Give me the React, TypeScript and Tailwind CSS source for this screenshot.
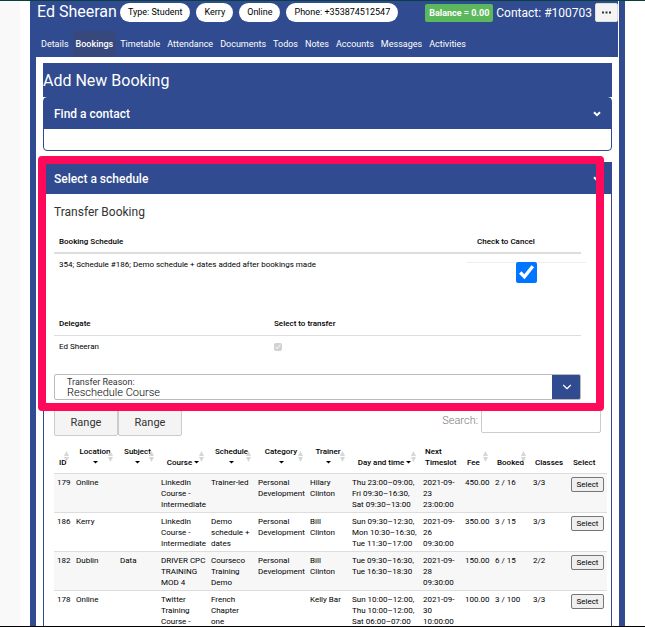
import React, { useState } from 'react';
import { ChevronDown } from 'lucide-react';

const tags = ['Type: Student', 'Kerry', 'Online', 'Phone: +353874512547'];

const tabs = [
  'Details',
  'Bookings',
  'Timetable',
  'Attendance',
  'Documents',
  'Todos',
  'Notes',
  'Accounts',
  'Messages',
  'Activities',
];

type Column = { label: string; width: string; caret?: 'below' | 'inline'; sort?: boolean };

const columns: Column[] = [
  { label: 'ID', width: 'w-[19px]', sort: true },
  { label: 'Location', width: 'w-[44px]', caret: 'below', sort: true },
  { label: 'Subject', width: 'w-[41px]', caret: 'below', sort: true },
  { label: 'Course', width: 'w-[50px]', caret: 'inline', sort: true },
  { label: 'Schedule', width: 'w-[47px]', caret: 'below', sort: true },
  { label: 'Category', width: 'w-[52px]', caret: 'below', sort: true },
  { label: 'Trainer', width: 'w-[42px]', caret: 'below', sort: true },
  { label: 'Day and time', width: 'w-[71px]', caret: 'inline', sort: true },
  { label: 'Next\nTimeslot', width: 'w-[42px]' },
  { label: 'Fee', width: 'w-[30px]', sort: true },
  { label: 'Booked', width: 'w-[38px]', sort: true },
  { label: 'Classes', width: 'w-[38px]' },
  { label: 'Select', width: 'w-[39px]' },
];

const schedules = [
  ['179', 'Online', '', 'LinkedIn\nCourse -\nIntermediate', 'Trainer-led', 'Personal\nDevelopment', 'Hilary\nClinton', 'Thu 23:00–09:00,\nFri 09:30–16:30,\nSat 09:30–13:00', '2021-09-\n23\n23:00:00', '450.00', '2 / 16', '3/3'],
  ['186', 'Kerry', '', 'LinkedIn\nCourse -\nIntermediate', 'Demo\nschedule +\ndates', 'Personal\nDevelopment', 'Bill\nClinton', 'Sun 09:30–12:30,\nMon 10:30–16:30,\nTue 11:30–17:00', '2021-09-\n26\n09:30:00', '350.00', '3 / 15', '3/3'],
  ['182', 'Dublin', 'Data', 'DRIVER CPC\nTRAINING\nMOD 4', 'Courseco\nTraining\nDemo', 'Personal\nDevelopment', 'Bill\nClinton', 'Tue 09:30–16:30,\nTue 16:30–18:30', '2021-09-\n28\n09:30:00', '150.00', '6 / 15', '2/2'],
  ['178', 'Online', '', 'Twitter\nTraining\nCourse -', 'French\nChapter\none', '', 'Kelly Bar', 'Sun 10:00–12:00,\nThu 10:00–12:00,\nSat 06:00–07:00', '2021-09-\n30\n10:00:00', '100.00', '3 / 100', '3/3'],
];

function Caret() {
  return (
    <svg viewBox="0 0 5 3" className="inline-block h-[3px] w-[5px] align-middle" aria-hidden="true">
      <path d="M0 0h5L2.5 2.5z" fill="#000" />
    </svg>
  );
}

function SortArrows() {
  return (
    <svg viewBox="0 0 5 11" className="absolute right-1 bottom-[11px] h-[11px] w-[5px]" aria-hidden="true">
      <path d="M2.5 0L5 5H0zM2.5 11L0 6h5z" fill="#d6d6d6" />
    </svg>
  );
}

function PanelHeader({ title }: { title: string }) {
  return (
    <button type="button" className="flex h-[31px] w-full items-center justify-between bg-[#304b8f] px-2.5 text-[12px] font-medium text-white">
      {title}
      <svg viewBox="0 0 8 6" className="h-1.5 w-2" aria-hidden="true">
        <path d="M1 1.2l3 3 3-3" fill="none" stroke="currentColor" strokeWidth="2" />
      </svg>
    </button>
  );
}

function Header() {
  return (
    <header className="mr-px bg-[#304b8f] text-white">
      <div className="flex h-[30px] items-start justify-between">
        <div className="flex items-center pl-px">
          <h1 className="mr-[3px] text-base leading-[22px]">Ed Sheeran</h1>
          <div className="flex gap-1.5">
            {tags.map((tag) => (
              <span key={tag} className="rounded-full bg-white px-2 text-[9px] leading-[19px] text-black">
                {tag}
              </span>
            ))}
          </div>
        </div>
        <div className="flex items-center gap-[3px] pt-0.5">
          <span className="rounded-xs bg-[#5cb85c] px-1 text-[9px] leading-[18px] font-bold">Balance = 0.00</span>
          <span className="text-[12px] leading-[18px]">Contact: #100703</span>
          <button type="button" aria-label="More actions" className="flex h-[19px] w-[23px] items-center justify-center rounded-xs border border-[#ddd] bg-[#f4f4f4] text-black">
            <svg viewBox="0 0 9 3" className="h-[3px] w-[9px]" aria-hidden="true">
              <path d="M0 .5h2v2H0zM3.5 .5h2v2h-2zM7 .5h2v2H7z" fill="#333" />
            </svg>
          </button>
        </div>
      </div>
      <nav className="flex pl-0.5">
        {tabs.map((tab) => (
          <a
            key={tab}
            href="#"
            className={tab === 'Bookings' ? 'mr-px bg-[#37487c] px-[3px] text-[9px] leading-[26px] font-medium' : 'mr-px px-[3px] text-[9px] leading-[26px]'}
          >
            {tab}
          </a>
        ))}
      </nav>
    </header>
  );
}

function TransferBooking() {
  const [cancel, setCancel] = useState(true);

  return (
    <div className="pr-[30px] pl-2.5 text-[8px] leading-[11px]">
      <h3 className="pt-2 text-[12px] leading-5 text-[#333]">Transfer Booking</h3>
      <table className="mt-[9px] w-full table-fixed text-left">
        <thead>
          <tr className="h-[22px] border-b-2 border-[#ddd]">
            <th className="px-[5px] font-medium">Booking Schedule</th>
            <th className="w-[109px] px-[5px] font-medium">Check to Cancel</th>
          </tr>
        </thead>
        <tbody>
          <tr className="align-top">
            <td className="px-[5px] pt-[5px]">354; Schedule #186; Demo schedule + dates added after bookings made</td>
            <td className="pt-2">
              <div className="-mx-[5px] flex justify-center border-t border-[#eee]">
                <input type="checkbox" aria-label="Check to Cancel" checked={cancel} onChange={(e) => setCancel(e.target.checked)} className="-mt-px h-[21px] w-[21px]" />
              </div>
            </td>
          </tr>
        </tbody>
      </table>
      <table className="mt-[29px] w-full table-fixed text-left">
        <thead>
          <tr className="h-[23px] border-b border-[#ddd]">
            <th className="w-[215px] px-[5px] font-medium">Delegate</th>
            <th className="px-[5px] font-medium">Select to transfer</th>
          </tr>
        </thead>
        <tbody>
          <tr className="h-[23px]">
            <td className="px-[5px]">Ed Sheeran</td>
            <td className="px-[5px]">
              <input type="checkbox" aria-label="Transfer Ed Sheeran" checked disabled readOnly className="block h-2 w-2" />
            </td>
          </tr>
        </tbody>
      </table>
      <div className="mt-4 flex h-[26px] overflow-hidden rounded-xs border border-[#bbb] bg-white">
        <div className="flex-1 pt-0.5 pl-3 text-[#333]">
          <label htmlFor="reason" className="block text-[9px] leading-[10px]">Transfer Reason:</label>
          <select id="reason" className="block h-[11px] w-full appearance-none p-0 text-[11px] leading-[11px] font-light text-black">
            <option>Reschedule Course</option>
          </select>
        </div>
        <span className="-my-px -mr-px flex w-[29px] items-center justify-center bg-[#304b8f] text-white">
          <ChevronDown className="h-3.5 w-3.5" />
        </span>
      </div>
    </div>
  );
}

function ScheduleTable() {
  return (
    <table className="w-full table-fixed text-left text-[8px] leading-[11px] whitespace-pre">
      <thead>
        <tr className="border-b border-[#ddd] align-bottom">
          {columns.map(({ label, width, caret, sort }) => (
            <th key={label} className={`relative pb-[5px] font-medium ${width} ${caret ? 'text-center' : 'pl-[5px]'}`}>
              {label}
              {caret === 'below' && <br />}
              {caret === 'inline' && ' '}
              {caret && <Caret />}
              {sort && <SortArrows />}
            </th>
          ))}
        </tr>
      </thead>
      <tbody>
        {schedules.map((row) => (
          <tr key={row[0]} className="border-b border-[#ddd] align-top odd:bg-[#f7f7f7]">
            {row.map((cell, i) => (
              <td key={i} className="pt-[3px] pb-0.5 pl-[3px]">{cell}</td>
            ))}
            <td className="pt-[3px] pl-[3px]">
              <button type="button" className="block h-[15px] w-[33px] rounded-xs border border-[#767676] bg-[#efefef] leading-3">Select</button>
            </td>
          </tr>
        ))}
      </tbody>
    </table>
  );
}

export default function App() {
  return (
    <div className="flex h-screen overflow-hidden border-t border-b border-t-[#08403f] border-b-black bg-white font-['Roboto',sans-serif] text-black">
      <aside className="w-5 shrink-0 bg-[#f9f9f9]" />
      <main className="mr-5 ml-2.5 min-w-0 flex-1 border-x-[6px] border-[#304b8f]">
        <Header />
        <div className="px-[7px] pt-1.5">
          <h2 className="bg-[#304b8f] pt-0.5 text-base leading-8 text-white">Add New Booking</h2>
          <section className="rounded-sm border border-[#304b8f]">
            <PanelHeader title="Find a contact" />
            <div className="h-[21px]" />
          </section>

          <section className="mt-[11px] border border-[#304b8f]">
            <div className="relative pb-2">
              <PanelHeader title="Select a schedule" />
              <TransferBooking />
              <div className="pointer-events-none absolute -top-[7px] right-[7px] -bottom-[3px] -left-1.5 rounded-sm border-8 border-[#ff0a5b]" />
            </div>
            <div className="pr-1 pl-2.5">
              <div className="flex justify-between pr-1.5 text-[#333]">
                <div className="flex text-[11px]">
                  <button type="button" className="h-7 w-16 rounded-b-xs border border-[#ccc] bg-[#f4f4f4] pt-0.5">Range</button>
                  <button type="button" className="h-7 w-16 rounded-b-xs border border-[#ccc] bg-[#f4f4f4] pt-0.5">Range</button>
                </div>
                <div className="flex h-[25px] items-center gap-[3px]">
                  <label htmlFor="search" className="pt-0.5 text-[11px] font-light text-[#777]">Search:</label>
                  <input id="search" type="text" className="h-[25px] w-[120px] rounded-xs border border-[#ccc] px-1 text-[11px]" />
                </div>
              </div>
              <div className="pt-2.5">
                <ScheduleTable />
              </div>
            </div>
          </section>
        </div>
      </main>
    </div>
  );
}
